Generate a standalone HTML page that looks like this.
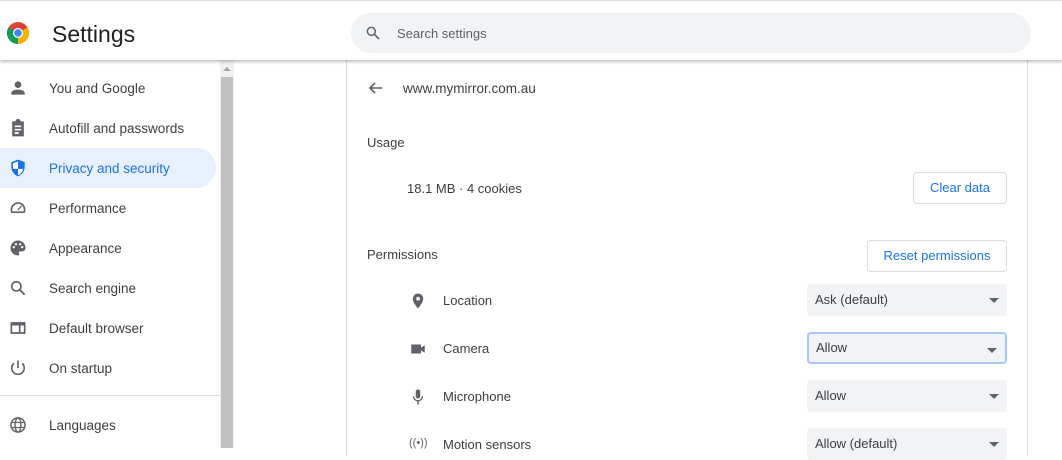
<!DOCTYPE html>
<html><head><style>
*{margin:0;padding:0;box-sizing:border-box}
body{width:1062px;height:448px;overflow:hidden;background:#fff;font-family:"Liberation Sans",sans-serif;color:#202124;position:relative}
.hdr{position:absolute;left:0;top:0;width:1062px;height:60px;background:#fff;border-top:1px solid #e0e0e0;box-shadow:0 2px 3px rgba(0,0,0,.25);z-index:2}
.title{position:absolute;left:52px;top:20px;font-size:23px;color:#202124}
.search{position:absolute;left:351px;top:12px;width:680px;height:40px;border-radius:20px;background:#f1f3f4}
.search span{position:absolute;left:46px;top:13px;font-size:13px;color:#5f6368}
.nav{position:absolute;left:0;top:68px;width:220px}
.item{height:40px;position:relative;font-size:13.5px;color:#3c4043}
.item span{position:absolute;left:49px;top:13px}
.item svg{position:absolute;left:8px;top:10px;width:20px;height:20px;fill:#5f6368}
.sel{background:#e8f0fe;border-radius:0 20px 20px 0;width:216px;color:#1a73e8}
.sel svg{fill:#1a73e8}
.sb{position:absolute;left:220px;top:60px;width:14px;height:388px;background:#f1f1f1}
.sb div{position:absolute;left:1px;top:17px;width:12px;height:371px;background:#c1c1c1}
.sb:before{content:"";position:absolute;left:3px;top:7px;border:4px solid transparent;border-bottom:4px solid #a3a3a3;border-top:0}
.card{position:absolute;left:346px;top:56px;width:682px;height:400px;border-left:1px solid #dadce0;border-right:1px solid #dadce0;font-size:13px;color:#3c4043}
.a{position:absolute}
.btn{position:absolute;border:1px solid #dadce0;border-radius:4px;color:#1a73e8;font-size:13px;text-align:center;height:32px;line-height:30px;background:#fff}
.dd{position:absolute;left:460px;width:200px;height:32px;background:#f1f3f4;border-radius:4px;font-size:13px;line-height:32px;padding-left:8px;color:#3c4043}
.dd:after{content:"";position:absolute;right:8px;top:14px;border:5px solid transparent;border-top:5px solid #5f6368;border-bottom:0}
.ico{position:absolute;left:62px;width:18px;height:18px;fill:#5f6368}
</style></head><body>
<div class="hdr">
<svg style="position:absolute;left:7px;top:21px" width="22" height="22" viewBox="0 0 22 22"><circle cx="11" cy="11" r="11" fill="#db4437"/><path d="M11 11 L1.5 5.5 A11 11 0 0 0 11 22 Z" fill="#0f9d58"/><path d="M11 11 L11 22 A11 11 0 0 0 20.5 5.5 Z" fill="#f4b400"/><circle cx="11" cy="11" r="5" fill="#fff"/><circle cx="11" cy="11" r="3.8" fill="#4285f4"/></svg>
<div class="title">Settings</div>
<div class="search"><svg style="position:absolute;left:14px;top:12px" width="16" height="16" viewBox="0 0 24 24"><circle cx="9.5" cy="9.5" r="6" fill="none" stroke="#5f6368" stroke-width="2.2"/><path d="M14 14l7 7" stroke="#5f6368" stroke-width="2.4"/></svg><span>Search settings</span></div>
</div>
<div class="nav">
<div class="item"><svg viewBox="0 0 24 24"><circle cx="12" cy="8" r="4"/><path d="M4 20v-2c0-3 5-4 8-4s8 1 8 4v2z"/></svg><span>You and Google</span></div>
<div class="item"><svg viewBox="0 0 24 24"><path d="M5 4h4a3 3 0 0 1 6 0h4v18H5z M8 9h8v2H8z M8 13h8v2H8z M8 17h5v2H8z" fill-rule="evenodd"/></svg><span>Autofill and passwords</span></div>
<div class="item sel"><svg viewBox="0 0 24 24"><path d="M12 2l8 3v6c0 5-3.5 9.5-8 11-4.5-1.5-8-6-8-11V5z"/><path d="M12 4.2v8.8H6V6.3z M12 13h6c-.6 3.8-3 6.6-6 7.6z" fill="#fff"/></svg><span>Privacy and security</span></div>
<div class="item"><svg viewBox="0 0 24 24"><path d="M12 5a9 9 0 0 0-8 13h16A9 9 0 0 0 12 5zm0 2a7 7 0 0 1 6.6 9H5.4A7 7 0 0 1 12 7z"/><path d="M11 14l5-5 1 1-5 5z"/></svg><span>Performance</span></div>
<div class="item"><svg viewBox="0 0 24 24"><path d="M12 3a9 9 0 0 0 0 18c1 0 1.5-.7 1.5-1.5 0-.8-.6-1.2-.6-2 0-.9.7-1.5 1.6-1.5H17a4 4 0 0 0 4-4c0-5-4-9-9-9z"/><circle cx="7" cy="11" r="1.4" fill="#fff"/><circle cx="9.5" cy="7.5" r="1.4" fill="#fff"/><circle cx="14.5" cy="7.5" r="1.4" fill="#fff"/><circle cx="17" cy="11" r="1.4" fill="#fff"/></svg><span>Appearance</span></div>
<div class="item"><svg viewBox="0 0 24 24"><circle cx="10" cy="10" r="5.5" fill="none" stroke="#5f6368" stroke-width="2"/><path d="M14 14l6 6" stroke="#5f6368" stroke-width="2.2"/></svg><span>Search engine</span></div>
<div class="item"><svg viewBox="0 0 24 24"><path d="M3 5h18v14H3z M5 9v8h8V9z M15 9v8h4V9z" fill-rule="evenodd"/></svg><span>Default browser</span></div>
<div class="item"><svg viewBox="0 0 24 24"><path d="M11 3h2v9h-2z"/><path d="M7 6.5A7.5 7.5 0 1 0 17 6.5" fill="none" stroke="#5f6368" stroke-width="2"/></svg><span>On startup</span></div>
<div style="height:8px;border-bottom:1px solid #e0e0e0;margin-bottom:9px"></div>
<div class="item"><svg viewBox="0 0 24 24"><circle cx="12" cy="12" r="8.5" fill="none" stroke="#5f6368" stroke-width="1.8"/><ellipse cx="12" cy="12" rx="3.5" ry="8.5" fill="none" stroke="#5f6368" stroke-width="1.6"/><path d="M4 9h16M4 15h16" stroke="#5f6368" stroke-width="1.6"/></svg><span>Languages</span></div>
</div>
<div class="sb"><div></div></div>
<div class="card">
<svg class="a" style="left:20px;top:24px" width="16" height="16" viewBox="0 0 16 16"><path d="M15 8H3M8 3L3 8l5 5" fill="none" stroke="#5f6368" stroke-width="1.6"/></svg>
<div class="a" style="left:56px;top:25px;font-size:13.5px">www.mymirror.com.au</div>
<div class="a" style="left:20px;top:79px">Usage</div>
<div class="a" style="left:60px;top:125px">18.1 MB · 4 cookies</div>
<div class="btn" style="left:566px;top:116px;width:94px">Clear data</div>
<div class="a" style="left:20px;top:191px">Permissions</div>
<div class="btn" style="left:520px;top:184px;width:140px">Reset permissions</div>
<svg class="ico" style="top:236px" viewBox="0 0 24 24"><path d="M12 2a7 7 0 0 0-7 7c0 5 7 13 7 13s7-8 7-13a7 7 0 0 0-7-7zm0 9.5a2.5 2.5 0 1 1 0-5 2.5 2.5 0 0 1 0 5z"/></svg>
<div class="a" style="left:96px;top:237px">Location</div>
<div class="dd" style="top:228px">Ask (default)</div>
<svg class="ico" style="top:284px" viewBox="0 0 24 24"><path d="M3 6h13v12H3z M16 10l5-3v10l-5-3z"/></svg>
<div class="a" style="left:96px;top:285px">Camera</div>
<div class="dd" style="top:276px;border:2px solid #a8c7fa;line-height:28px;padding-left:7px">Allow</div>
<svg class="ico" style="top:332px" viewBox="0 0 24 24"><rect x="9" y="2" width="6" height="12" rx="3"/><path d="M6 11a6 6 0 0 0 12 0" fill="none" stroke="#5f6368" stroke-width="1.8"/><path d="M11 17h2v5h-2z"/></svg>
<div class="a" style="left:96px;top:333px">Microphone</div>
<div class="dd" style="top:324px">Allow</div>
<div class="a" style="left:62px;top:381px;font-size:11px;color:#5f6368">((•))</div>
<div class="a" style="left:96px;top:381px">Motion sensors</div>
<div class="dd" style="top:372px">Allow (default)</div>
</div>
</body></html>
